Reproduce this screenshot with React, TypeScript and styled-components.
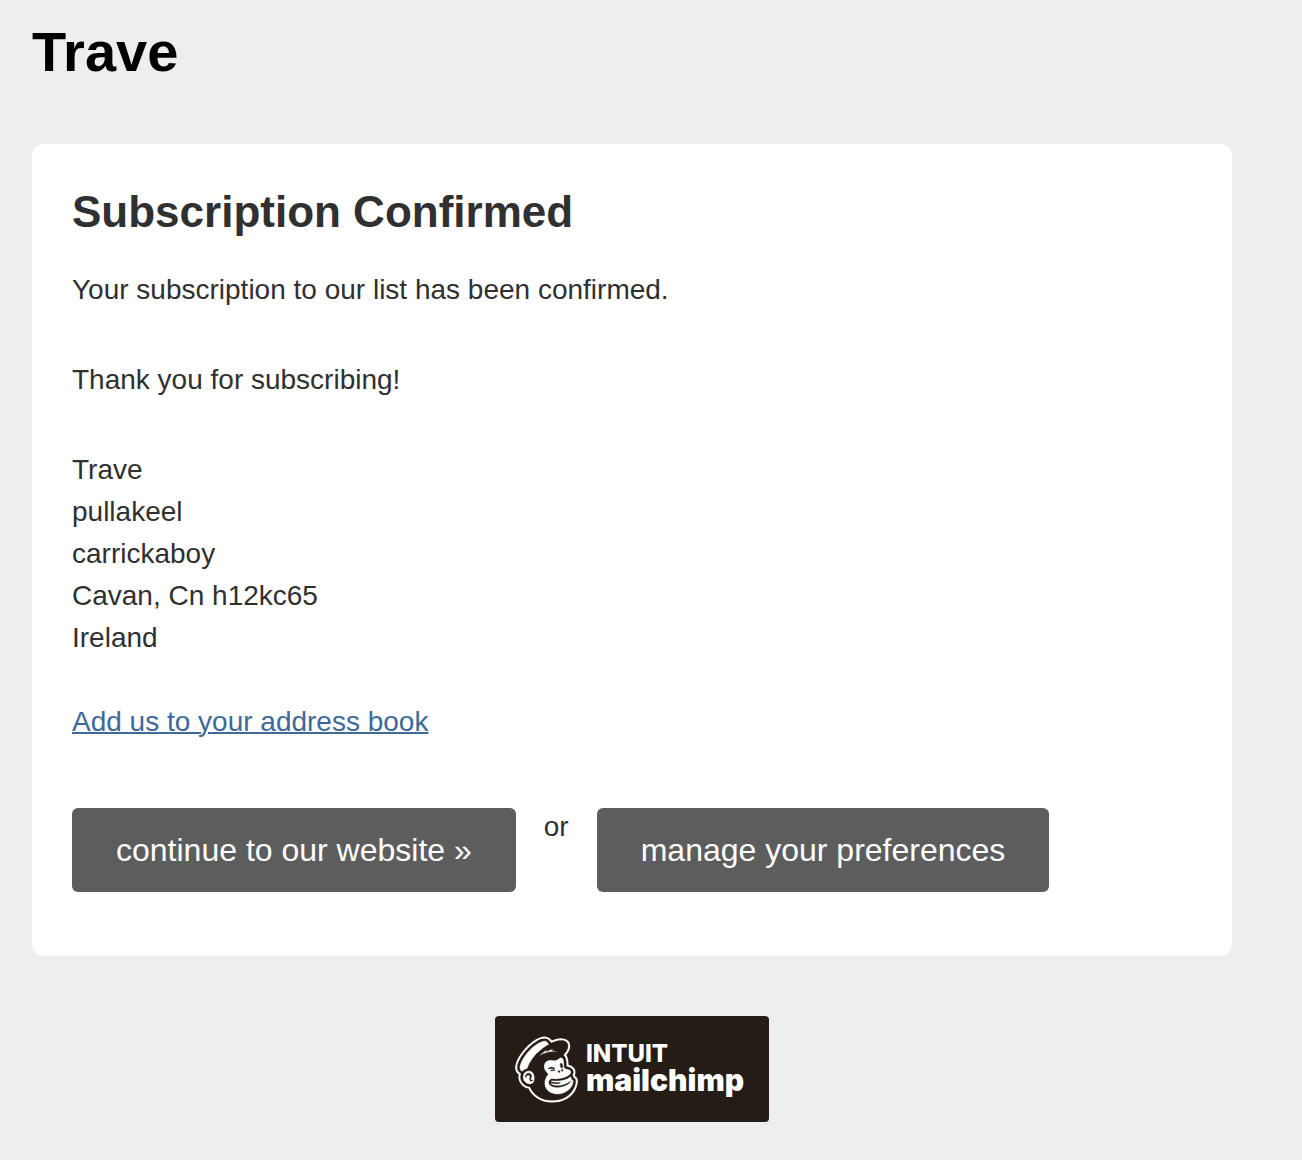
import React from "react";
import styled, { createGlobalStyle } from "styled-components";
import { SiMailchimp } from "react-icons/si";

const ink = "#241c15";

const GlobalStyle = createGlobalStyle`
  *, *::before, *::after { box-sizing: border-box; }
  body {
    margin: 0;
    background: #eeeeee;
    color: #303030;
    font: 28px/42px "Liberation Sans", Helvetica, Arial, sans-serif;
  }
  h1, h2, p, address { margin: 0; }
`;

const Page = styled.div`
  max-width: 1264px;
  padding: 20px 32px 38px;
`;

const ListName = styled.h1`
  color: #000000;
  font-size: 56px;
  line-height: 64px;
`;

const Card = styled.main`
  margin-top: 60px;
  padding: 40px 40px 64px;
  border-radius: 12px;
  background: #ffffff;
`;

const Heading = styled.h2`
  margin-bottom: 29px;
  font-size: 44px;
  line-height: 56px;
`;

const Paragraph = styled.p`
  margin-bottom: 48px;
`;

const Address = styled.address`
  margin-bottom: 42px;
  font-style: normal;
`;

const TextLink = styled.a`
  color: #3e6998;
  text-decoration: underline;
  text-decoration-thickness: 2px;
`;

const Actions = styled.div`
  display: flex;
  flex-wrap: wrap;
  align-items: flex-start;
  gap: 28px;
  margin-top: 65px;
`;

const Separator = styled.span`
  line-height: 38px;
`;

const Button = styled.button`
  padding: 20px 44px;
  border: 0;
  border-radius: 6px;
  background: #5d5d5d;
  color: #ffffff;
  font: inherit;
  font-size: 32px;
  line-height: 44px;
  cursor: pointer;
`;

const Footer = styled.footer`
  display: flex;
  justify-content: center;
  margin-top: 60px;
`;

const LogoLink = styled.a`
  display: flex;
  align-items: center;
  gap: 6px;
  width: 274px;
  height: 106px;
  padding: 0 18px;
  border-radius: 4px;
  background: ${ink};
  color: #ffffff;
  text-decoration: none;
`;

const Mascot = styled.svg`
  flex: none;
  width: 67px;
  height: 67px;
`;

const Wordmark = styled.span`
  display: flex;
  flex-direction: column;
  padding-bottom: 2px;
  font-family: Inter, "Liberation Sans", sans-serif;
`;

const Parent = styled.span`
  font-size: 24px;
  font-weight: 800;
  line-height: 24px;
`;

const Brand = styled.span`
  font-size: 30px;
  font-weight: 900;
  line-height: 28px;
`;

const addressLines = ["Trave", "pullakeel", "carrickaboy", "Cavan, Cn h12kc65", "Ireland"];

function Freddie() {
  return (
    <Mascot viewBox="-1 -1 26 26" aria-hidden="true">
      <path
        fill="#ffffff"
        d="M11.2 0C12 0 12.4 .3 13.9 1.7C17 .4 20.4 .4 20.4 2.8C20.4 4 19.6 5.3 18.6 6.4C19.6 7.6 19.6 9 19.7 10.8C21.4 11.2 22.4 12 22.4 13L22.1 14.2L22.4 15.2C23 15.2 23.3 15.8 23.3 16.6C22.6 21 19 24 14.3 24C10 24 7 22 5.6 18.7C3.6 18.6 2 17 2 15L2.2 13.6L1.2 12.7C-.6 10 5.5 .4 11.2 0Z"
      />
      <SiMailchimp size={24} color="#ffffff" stroke="#ffffff" strokeWidth={1.7} overflow="visible" />
      <SiMailchimp size={24} color={ink} stroke={ink} strokeWidth={0.15} />
    </Mascot>
  );
}

export default function App() {
  return (
    <>
      <GlobalStyle />
      <Page>
        <ListName>Trave</ListName>
        <Card>
          <Heading>Subscription Confirmed</Heading>
          <Paragraph>Your subscription to our list has been confirmed.</Paragraph>
          <Paragraph>Thank you for subscribing!</Paragraph>
          <Address>
            {addressLines.map((line) => (
              <div key={line}>{line}</div>
            ))}
          </Address>
          <p>
            <TextLink href="#address-book">Add us to your address book</TextLink>
          </p>
          <Actions>
            <Button type="button">continue to our website »</Button>
            <Separator>or</Separator>
            <Button type="button">manage your preferences</Button>
          </Actions>
        </Card>
        <Footer>
          <LogoLink href="#mailchimp">
            <Freddie />
            <Wordmark>
              <Parent>INTUIT</Parent>
              <Brand>mailchimp</Brand>
            </Wordmark>
          </LogoLink>
        </Footer>
      </Page>
    </>
  );
}
